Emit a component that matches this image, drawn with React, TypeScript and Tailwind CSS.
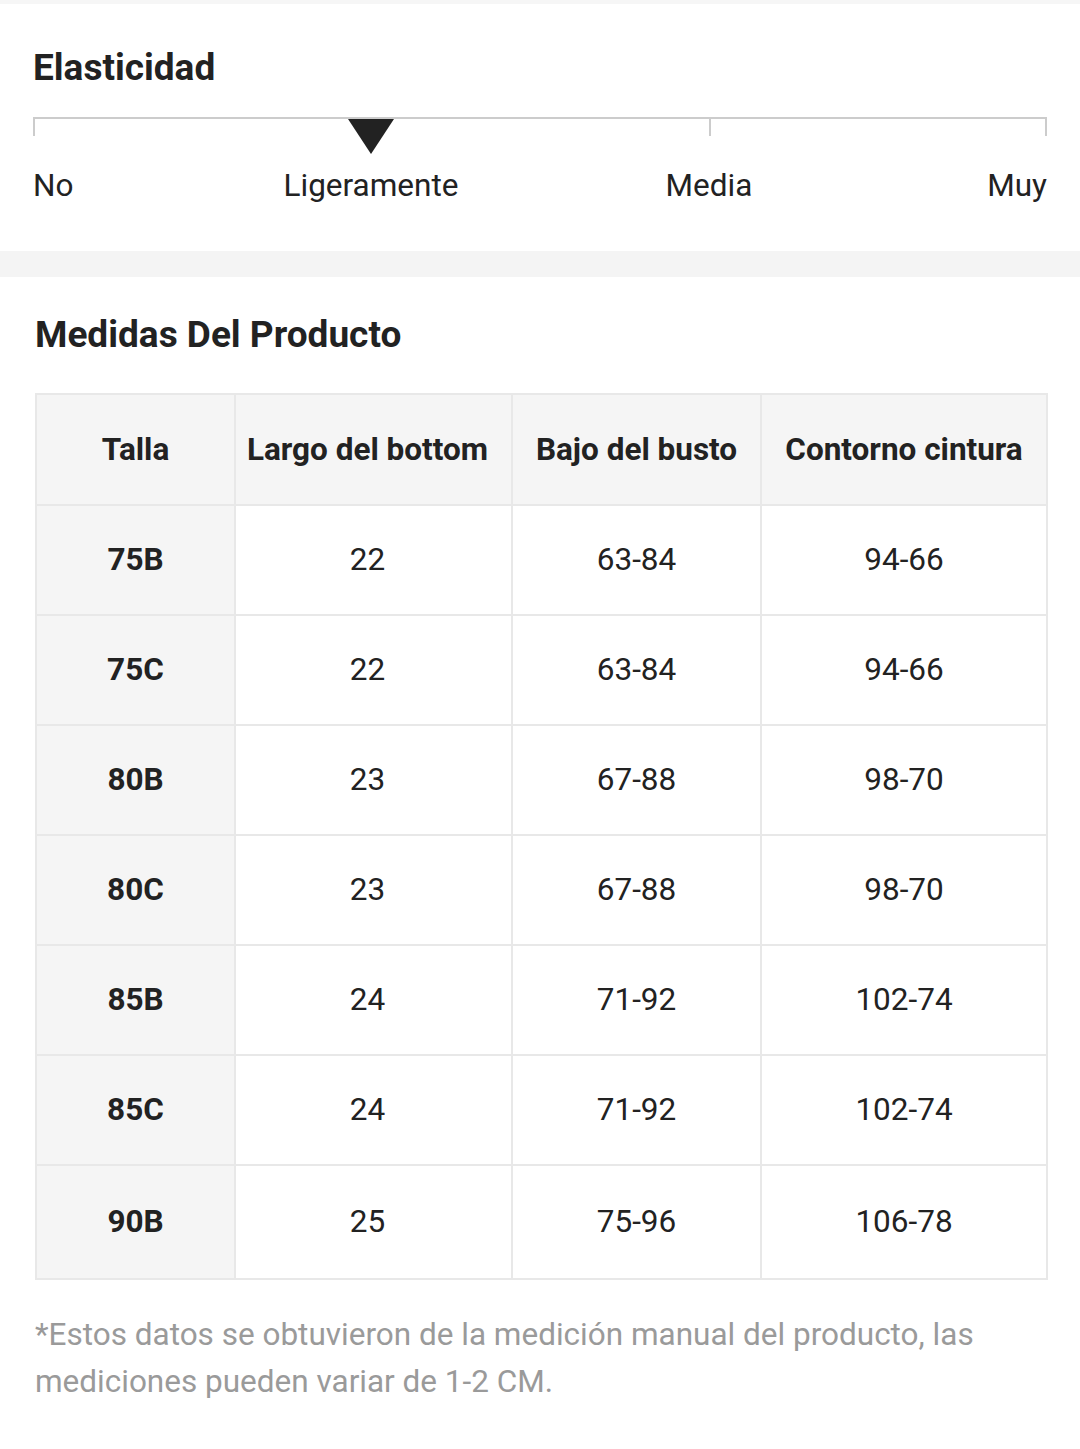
import React from "react";

const rows: [string, string, string, string][] = [
  ["75B", "22", "63-84", "94-66"],
  ["75C", "22", "63-84", "94-66"],
  ["80B", "23", "67-88", "98-70"],
  ["80C", "23", "67-88", "98-70"],
  ["85B", "24", "71-92", "102-74"],
  ["85C", "24", "71-92", "102-74"],
  ["90B", "25", "75-96", "106-78"],
];

export default function App() {
  return (
    <div className="w-[1080px] min-h-[1449px] bg-white text-[#222222]" style={{ fontFamily: "Roboto, 'Noto Sans', Arial, sans-serif" }}>
      <div className="h-[4px] bg-[#f6f6f6]" />
      {/* Elasticidad */}
      <section className="px-[33px] pt-[42px] pb-[47px]">
        <h2 className="text-[37px] leading-[43px] font-bold text-[#222222]">Elasticidad</h2>
        <div className="mt-[28px]">
          <div className="h-[2px] bg-[#cccccc]" />
          <div className="grid grid-cols-6 h-[35px]">
            <div className="border-l-2 border-[#cccccc] h-[17px]" />
            <div className="col-span-2 flex justify-center">
              <svg width="46" height="35" viewBox="0 0 46 35">
                <polygon points="0,0 46,0 23,35" fill="#222222" />
              </svg>
            </div>
            <div />
            <div className="border-l-2 border-[#cccccc] h-[17px]" />
            <div className="border-r-2 border-[#cccccc] h-[17px]" />
          </div>
          <div className="grid grid-cols-6 mt-[14px] text-[31.5px] leading-[36px] text-[#222222]">
            <div className="text-left">No</div>
            <div className="col-span-2 text-center">Ligeramente</div>
            <div className="col-span-2 text-center">Media</div>
            <div className="text-right">Muy</div>
          </div>
        </div>
      </section>
      <div className="h-[26px] bg-[#f4f4f4]" />
      {/* Medidas */}
      <section className="px-[35px] pt-[36px] pb-[40px]">
        <h2 className="text-[37px] leading-[43px] font-bold text-[#222222]">Medidas Del Producto</h2>
        <table className="mt-[37px] w-[1011px] table-fixed border-collapse border-2 border-[#e8e8e8] text-[31.5px] text-[#222222]">
          <colgroup>
            <col className="w-[199px]" />
            <col className="w-[277px]" />
            <col className="w-[249px]" />
            <col className="w-[286px]" />
          </colgroup>
          <thead>
            <tr className="h-[111px] bg-[#f5f5f5]">
              <th className="border-2 border-[#e8e8e8] font-bold text-center align-middle p-0">Talla</th>
              <th className="border-2 border-[#e8e8e8] font-bold text-center align-middle p-0 pr-[12px] whitespace-nowrap">Largo del bottom</th>
              <th className="border-2 border-[#e8e8e8] font-bold text-center align-middle p-0 whitespace-nowrap">Bajo del busto</th>
              <th className="border-2 border-[#e8e8e8] font-bold text-center align-middle p-0 whitespace-nowrap">Contorno cintura</th>
            </tr>
          </thead>
          <tbody>
            {rows.map((r, i) => (
              <tr key={r[0]} className={i === rows.length - 1 ? "h-[114px]" : "h-[110px]"}>
                <td className="border-2 border-[#e8e8e8] bg-[#f5f5f5] font-bold text-center align-middle p-0">{r[0]}</td>
                <td className="border-2 border-[#e8e8e8] text-center align-middle p-0 pr-[12px]">{r[1]}</td>
                <td className="border-2 border-[#e8e8e8] text-center align-middle p-0">{r[2]}</td>
                <td className="border-2 border-[#e8e8e8] text-center align-middle p-0">{r[3]}</td>
              </tr>
            ))}
          </tbody>
        </table>
        <p className="mt-[31px] text-[31.5px] leading-[47px] text-[#9a9a9a] pr-[60px]">
          *Estos datos se obtuvieron de la medición manual del producto, las mediciones pueden variar de 1-2 CM.
        </p>
      </section>
    </div>
  );
}
